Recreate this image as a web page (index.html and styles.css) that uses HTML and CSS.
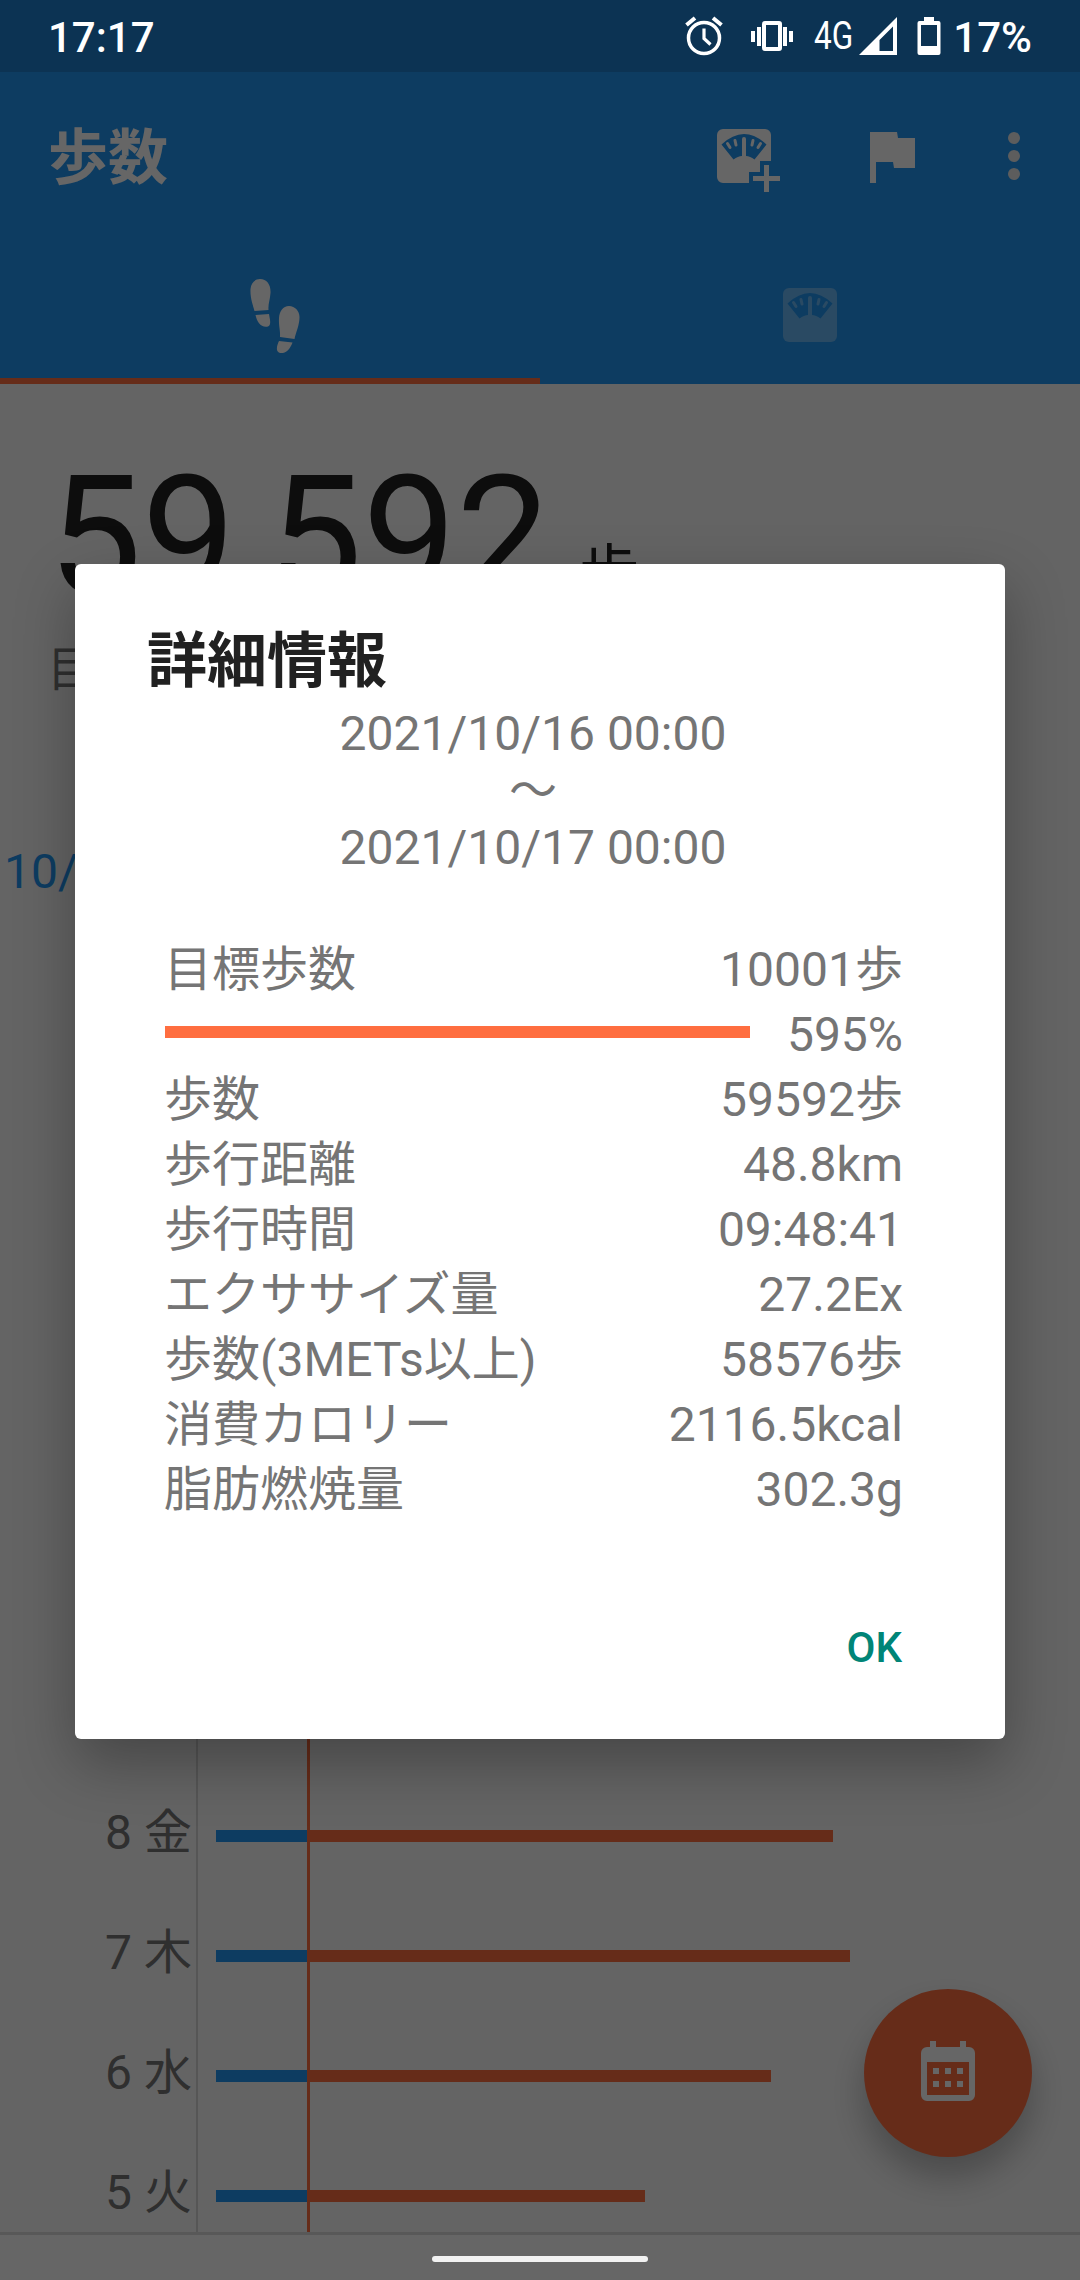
FILE: index.html
```html
<!DOCTYPE html>
<html lang="ja">
<head>
    <meta charset="UTF-8">
    <title>歩数</title>
    <link rel="stylesheet" href="styles.css">
</head>
<body>
    <svg class="defs" width="0" height="0">
        <defs>
            <g id="dial">
                <path d="M4.500 15.500Q27 -5.500 49.500 15.500L37.500 30.500Q33 27 29 27V10a2 2 0 0 0-4 0V27Q21 27 16.500 30.500Z"/>
            </g>
            <g id="ticks" fill="none" stroke-width="3" stroke-linecap="round">
                <path d="M10.500 14.500l2.500 4M18 11.500l1 4.500M36 11.500l-1 4.500M43.500 14.500l-2.500 4"/>
            </g>
        </defs>
    </svg>

    <div class="app">
        <header class="header">
            <div class="toolbar">
                <h1>歩数</h1>
                <svg class="icon-add-scale" viewBox="0 0 64 64" fill="#fff">
                    <path d="M6 0H48a6 6 0 0 1 6 6V32H43V43H32V54H6a6 6 0 0 1-6-6V6a6 6 0 0 1 6-6Z"/>
                    <path d="M47 36h5v11h11v5H52v11h-5V52H36v-5h11z"/>
                    <use href="#dial" fill="#2196f3"/>
                    <use href="#ticks" stroke="#fff"/>
                </svg>
                <svg class="icon-flag" viewBox="0 0 45 51" fill="#fff">
                    <path d="M0 0H27L28 6H45V36H24L23 30H6V51H0Z"/>
                </svg>
                <svg class="icon-more" viewBox="0 0 12 48" fill="#e9e9e9">
                    <circle cx="6" cy="6" r="6"/><circle cx="6" cy="24" r="6"/><circle cx="6" cy="42" r="6"/>
                </svg>
            </div>
            <div class="tabs">
                <div class="tab active">
                    <svg class="icon-steps" viewBox="0 0 50 74" fill="#fff">
                        <path d="M10 0C17 0 21 6 20.500 14C20 21 18 25 18.500 31L4.500 32C3 26 0 19 .5 10C1 4 5 0 10 0Z"/>
                        <path d="M5.500 36L19 35C19.500 39 22 46 18 47.500C11 49 7 43 5.500 36Z"/>
                        <path d="M39 27C45 27 49.500 32 49.500 38C49.500 46 46 53 44.500 60L30 58C30.500 51 28.500 47 29 39C29.500 32 33 27 39 27Z"/>
                        <path d="M29 62L42.500 63.500C40 70 36 75 30 74C25 73 27 66 29 62Z"/>
                    </svg>
                </div>
                <div class="tab">
                    <svg class="icon-scale" viewBox="0 0 54 54">
                        <rect width="54" height="54" rx="6" fill="#69b9f7"/>
                        <use href="#dial" fill="#2196f3"/>
                        <use href="#ticks" stroke="#69b9f7"/>
                    </svg>
                </div>
            </div>
        </header>

        <main class="content">
            <div class="total"><span class="total-num">59,592</span><span class="total-unit">歩</span></div>
            <div class="goal">目</div>
            <div class="month">10/</div>
            <div class="chart">
                <div class="day"><span class="label">8 金</span><div class="bar" style="width: 617px"></div></div>
                <div class="day"><span class="label">7 木</span><div class="bar" style="width: 634px"></div></div>
                <div class="day"><span class="label">6 水</span><div class="bar" style="width: 555px"></div></div>
                <div class="day"><span class="label">5 火</span><div class="bar" style="width: 429px"></div></div>
                <div class="goal-line"></div>
            </div>
        </main>
        <div class="nav"></div>

        <div class="fab">
            <svg class="icon-calendar" viewBox="0 0 54 60" fill="#fff">
                <path fill-rule="evenodd" d="M9 0h6v6h24V0h6v6h3a6 6 0 0 1 6 6v42a6 6 0 0 1-6 6H6a6 6 0 0 1-6-6V12a6 6 0 0 1 6-6h3zM6 21v33h42V21z"/>
                <path d="M12 27h6v6h-6zM24 27h6v6h-6zM36 27h6v6h-6zM12 40h6v6h-6zM24 40h6v6h-6zM36 40h6v6h-6z"/>
            </svg>
        </div>
    </div>

    <div class="scrim"></div>

    <div class="status">
        <span class="clock">17:17</span>
        <svg class="icon-alarm" viewBox="0 0 38 40" fill="none" stroke="#fff">
            <circle cx="19" cy="22" r="15.500" stroke-width="3.500"/>
            <path d="M1.500 9L10 2M36.500 9L28 2" stroke-width="4"/>
            <path d="M19 12.500V22.500L25.500 28.500" stroke-width="3.200"/>
        </svg>
        <svg class="icon-vibrate" viewBox="0 0 42 32" fill="#fff">
            <path d="M0 11h4v11H0zM6 7h4v19H6zM32 7h4v19h-4zM38 11h4v11h-4z"/>
            <rect x="13" y="3" width="16" height="26" rx="1" fill="none" stroke="#fff" stroke-width="4"/>
        </svg>
        <span class="network">4G</span>
        <svg class="icon-signal" viewBox="0 0 38 38" fill="#fff">
            <path fill-rule="evenodd" d="M38 0V38H0ZM34 9.500L20.500 23V34H34Z"/>
        </svg>
        <svg class="icon-battery" viewBox="0 0 24 38" fill="#fff">
            <path fill-rule="evenodd" d="M7 0h10v4h4.500a2 2 0 0 1 2 2v30a2 2 0 0 1-2 2H2.500a2 2 0 0 1-2-2V6a2 2 0 0 1 2-2H7zM4 8v21h16V8z"/>
        </svg>
        <span class="percent">17%</span>
    </div>

    <div class="dialog">
        <h2>詳細情報</h2>
        <div class="period">
            <div>2021/10/16 00:00</div>
            <div>〜</div>
            <div>2021/10/17 00:00</div>
        </div>
        <div class="details">
            <div class="row"><span>目標歩数</span><span>10001歩</span></div>
            <div class="row"><div class="progress"></div><span>595%</span></div>
            <div class="row"><span>歩数</span><span>59592歩</span></div>
            <div class="row"><span>歩行距離</span><span>48.8km</span></div>
            <div class="row"><span>歩行時間</span><span>09:48:41</span></div>
            <div class="row"><span>エクササイズ量</span><span>27.2Ex</span></div>
            <div class="row"><span>歩数(3METs以上)</span><span>58576歩</span></div>
            <div class="row"><span>消費カロリー</span><span>2116.5kcal</span></div>
            <div class="row"><span>脂肪燃焼量</span><span>302.3g</span></div>
        </div>
        <div class="ok">OK</div>
    </div>
    <div class="home-pill"></div>
</body>
</html>
```
FILE: styles.css
```css
:root {
    --blue: #2196f3;
    --orange: #ff6e40;
    --page: #fafafa;
    --text: #212121;
}
* {
    box-sizing: border-box;
}
body {
    margin: 0;
    width: 1080px;
    height: 2280px;
    position: relative;
    overflow: hidden;
    font-family: Roboto, "Noto Sans CJK JP", sans-serif;
    font-size: 48px;
}
svg {
    display: block;
    flex: none;
}
.defs {
    position: absolute;
}
.app {
    height: 2280px;
    display: flex;
    flex-direction: column;
    background: var(--page);
}

/* header */
.header {
    height: 384px;
    padding-top: 72px;
    background: var(--blue);
    flex: none;
}
.toolbar {
    height: 168px;
    padding: 0 60px 0 48px;
    display: flex;
    align-items: center;
}
.toolbar h1 {
    margin: 0 auto 0 0;
    padding-top: 6px;
    font-size: 60px;
    font-weight: 700;
    line-height: 84px;
    color: #fff;
}
.icon-add-scale {
    width: 64px;
    height: 64px;
    margin: 10px 89px 0 0;
}
.icon-flag {
    width: 45px;
    height: 51px;
    margin: 3px 93px 0 0;
}
.icon-more {
    width: 12px;
    height: 48px;
}
.tabs {
    height: 144px;
    display: flex;
}
.tab {
    flex: 1;
    display: flex;
    justify-content: center;
    align-items: center;
    border-bottom: 6px solid transparent;
}
.tab.active {
    border-bottom-color: var(--orange);
}
.icon-steps {
    width: 50px;
    height: 74px;
    margin: 13px 0 0 9px;
}
.icon-scale {
    width: 54px;
    height: 54px;
    margin-top: 12px;
}

/* steps */
.content {
    height: 1848px;
    display: flex;
    flex-direction: column;
    color: var(--text);
}
.total {
    height: 240px;
    padding: 55px 0 0 48px;
    line-height: 197px;
}
.total-num {
    font-size: 167px;
}
.total-unit {
    font-size: 60px;
    margin-left: 29px;
}
.goal {
    height: 180px;
    padding: 10px 0 0 47px;
    line-height: 72px;
    color: #757575;
}
.month {
    padding-left: 4px;
    height: 72px;
    line-height: 72px;
    margin-top: 32px;
    color: var(--blue);
}
.chart {
    position: relative;
    flex: 1;
    display: flex;
    flex-direction: column;
    justify-content: flex-end;
    overflow: hidden;
    background: linear-gradient(#d6d6d6, #d6d6d6) 196px 0 / 2px 100% no-repeat;
}
.day {
    flex: none;
    height: 120px;
    display: flex;
    align-items: center;
}
.day:nth-child(4) {
    margin-bottom: -24px;
}
.label {
    width: 216px;
    padding: 0 24px 6px 0;
    text-align: right;
    line-height: 72px;
    color: #757575;
}
.bar {
    height: 12px;
    background: linear-gradient(90deg, var(--blue) 91px, var(--orange) 91px);
}
.goal-line {
    position: absolute;
    left: 307px;
    top: 0;
    bottom: 0;
    width: 3px;
    background: var(--orange);
}
.nav {
    height: 48px;
    background: #fff;
    border-top: 3px solid #dcdcdc;
}
.fab {
    position: absolute;
    right: 48px;
    bottom: 123px;
    width: 168px;
    height: 168px;
    padding: 52px 57px;
    border-radius: 50%;
    background: var(--orange);
    box-shadow: 0 20px 34px rgba(0,0,0,0.26);
}
.scrim {
    position: absolute;
    inset: 0;
    background: rgba(0,0,0,0.6);
}

/* status bar */
.status {
    position: absolute;
    top: 0;
    left: 0;
    width: 1080px;
    height: 72px;
    padding: 0 48px;
    display: flex;
    align-items: center;
    background: #0c3353;
    color: #fff;
}
.clock {
    margin-right: auto;
    padding-top: 2px;
    font-size: 42px;
    font-weight: 500;
}
.icon-alarm {
    width: 38px;
    height: 40px;
}
.icon-vibrate {
    width: 42px;
    height: 32px;
    margin-left: 28px;
}
.network {
    font-size: 38px;
    margin-left: 21px;
    transform: scaleX(0.83);
    transform-origin: 0 50%;
    width: 45px;
}
.icon-signal {
    width: 38px;
    height: 38px;
}
.icon-battery {
    width: 24px;
    height: 38px;
    margin: 0 12px 0 20px;
}
.percent {
    padding-top: 2px;
    font-size: 42px;
    font-weight: 500;
}

/* dialog */
.dialog {
    position: absolute;
    left: 75px;
    top: 564px;
    width: 930px;
    height: 1175px;
    border-radius: 6px;
    background: #fff;
    box-shadow: 0 24px 60px rgba(0,0,0,0.3);
    color: #757575;
}
.dialog h2 {
    margin: 0;
    padding: 56px 0 0 72px;
    font-size: 60px;
    font-weight: 700;
    line-height: 84px;
    color: var(--text);
}
.period {
    width: 916px;
    padding-top: 1px;
    line-height: 57px;
    text-align: center;
}
.details {
    padding: 61px 102px 0 89px;
}
.row {
    height: 65px;
    line-height: 65px;
    display: flex;
    justify-content: space-between;
}
.progress {
    width: 585px;
    height: 12px;
    margin: 24px 0 0 1px;
    background: var(--orange);
}
.ok {
    padding: 101px 103px 0 0;
    text-align: right;
    font-size: 42px;
    font-weight: 500;
    line-height: 50px;
    color: #008577;
}
.home-pill {
    position: absolute;
    left: 432px;
    top: 2256px;
    width: 216px;
    height: 6px;
    border-radius: 3px;
    background: #f2f2f2;
}
```
